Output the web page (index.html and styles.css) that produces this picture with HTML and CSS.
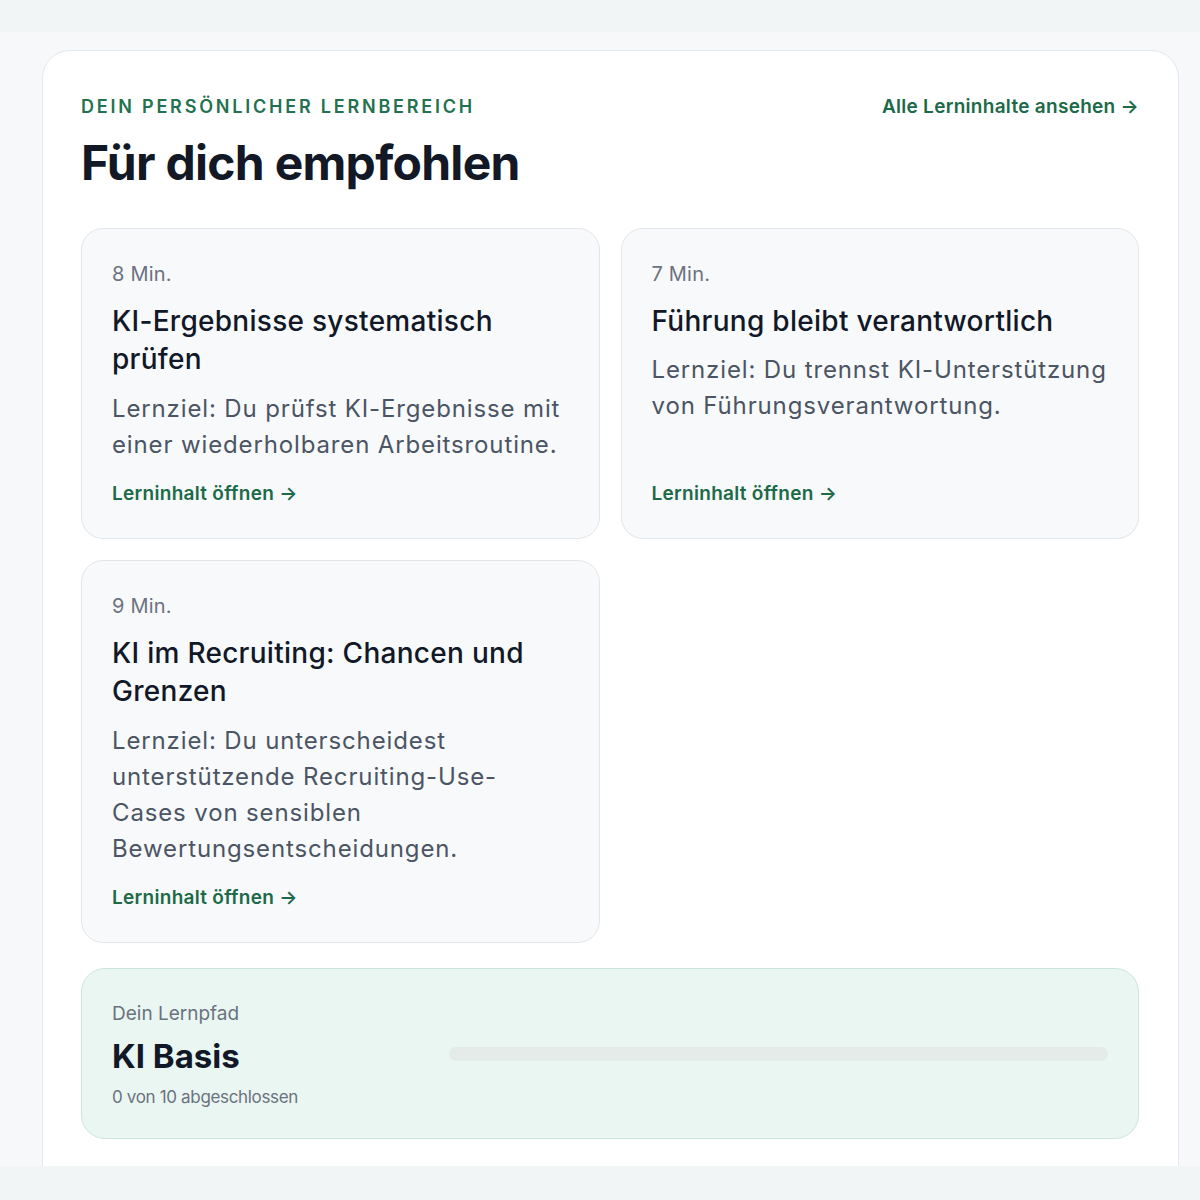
FILE: index.html
```html
<!DOCTYPE html>
<html lang="de">
<head>
<meta charset="utf-8">
<title>Für dich empfohlen</title>
<link rel="stylesheet" href="styles.css">
</head>
<body>
<div class="topbar"></div>
<main class="main">
  <section class="panel">
    <header class="panel-head">
      <div class="head-text">
        <p class="eyebrow">Dein persönlicher Lernbereich</p>
        <h1 class="title">Für dich empfohlen</h1>
      </div>
      <a class="link link-all" href="#">Alle Lerninhalte ansehen →</a>
    </header>

    <div class="cards">
      <article class="card">
        <p class="card-meta">8 Min.</p>
        <h2 class="card-title">KI-Ergebnisse systematisch prüfen</h2>
        <p class="card-desc">Lernziel: Du prüfst KI-Ergebnisse mit einer wiederholbaren Arbeitsroutine.</p>
        <a class="link card-link" href="#">Lerninhalt öffnen →</a>
      </article>
      <article class="card">
        <p class="card-meta">7 Min.</p>
        <h2 class="card-title">Führung bleibt verantwortlich</h2>
        <p class="card-desc">Lernziel: Du trennst KI-Unterstützung von Führungsverantwortung.</p>
        <a class="link card-link" href="#">Lerninhalt öffnen →</a>
      </article>
      <article class="card">
        <p class="card-meta">9 Min.</p>
        <h2 class="card-title">KI im Recruiting: Chancen und Grenzen</h2>
        <p class="card-desc">Lernziel: Du unterscheidest unterstützende Recruiting-Use-Cases von sensiblen Bewertungsentscheidungen.</p>
        <a class="link card-link" href="#">Lerninhalt öffnen →</a>
      </article>
    </div>

    <div class="path">
      <div class="path-text">
        <p class="path-label">Dein Lernpfad</p>
        <h3 class="path-name">KI Basis</h3>
        <p class="path-count">0 von 10 abgeschlossen</p>
      </div>
      <div class="progress"><div class="progress-fill" style="width:0%"></div></div>
    </div>
  </section>
</main>
<div class="bottombar"></div>
</body>
</html>
```
FILE: styles.css
```css
* { box-sizing: border-box; }

html, body {
  margin: 0;
  padding: 0;
}

body {
  background: #f2f5f6;
  font-family: Inter, "Noto Sans", "Liberation Sans", sans-serif;
  color: #111827;
}

.topbar {
  height: 32px;
  background: #f2f5f6;
}

.main {
  height: 1134px;
  overflow: hidden;
  background: #f6f8f9;
  padding: 18px 21px 0 42px;
}

.panel {
  background: #ffffff;
  border: 1px solid #e4e7eb;
  border-radius: 28px;
  padding: 46px 39px 40px 38px;
  min-height: 1200px;
}

.panel-head {
  display: flex;
  justify-content: space-between;
  align-items: flex-start;
}

.eyebrow {
  margin: 0;
  font-size: 18px;
  line-height: 20px;
  font-weight: 600;
  letter-spacing: 0.155em;
  text-transform: uppercase;
  color: #237150;
}

.title {
  margin: 17px 0 0;
  font-size: 48px;
  line-height: 57.6px;
  font-weight: 700;
  letter-spacing: -0.015em;
  color: #121826;
}

.link {
  color: #1c6a47;
  font-weight: 600;
  font-size: 19px;
  line-height: 20px;
  letter-spacing: 0.015em;
  text-decoration: none;
}

.cards {
  margin-top: 36px;
  display: grid;
  grid-template-columns: 1fr 1fr;
  gap: 21px 21px;
}

.card {
  display: flex;
  flex-direction: column;
  align-items: flex-start;
  background: #f8f9fb;
  border: 1px solid #e2e5ea;
  border-radius: 22px;
  padding: 32px 30px 31px;
}

.card-meta {
  margin: 0;
  font-size: 20px;
  line-height: 27px;
  letter-spacing: 0.01em;
  color: #6b7280;
}

.card-title {
  margin: 14px 0 0;
  font-size: 28px;
  line-height: 38.5px;
  font-weight: 500;
  letter-spacing: 0.01em;
  color: #111827;
}

.card-desc {
  margin: 12px 0 0;
  font-size: 24px;
  line-height: 36px;
  letter-spacing: 0.036em;
  color: #4b5563;
}

.card-link {
  margin-top: auto;
  padding-top: 17px;
  line-height: 27px;
}

.path {
  margin-top: 25px;
  display: grid;
  grid-template-columns: 1fr 2fr;
  gap: 8px;
  align-items: center;
  background: #eaf6f1;
  border: 1px solid #cde6da;
  border-radius: 24px;
  padding: 30px 30px 29px;
}

.path-label {
  margin: 0;
  font-size: 19px;
  line-height: 30px;
  color: #6b7280;
}

.path-name {
  margin: 7px 0 0;
  font-size: 33px;
  line-height: 40px;
  font-weight: 700;
  color: #111827;
}

.path-count {
  margin: 9px 0 0;
  font-size: 17px;
  line-height: 24px;
  letter-spacing: -0.02em;
  color: #6b7280;
}

.progress {
  height: 14px;
  border-radius: 999px;
  background: #e4ebe8;
  overflow: hidden;
}

.progress-fill {
  height: 100%;
  background: #1f6b4b;
}

.bottombar {
  height: 34px;
  background: #f2f5f6;
}
```
